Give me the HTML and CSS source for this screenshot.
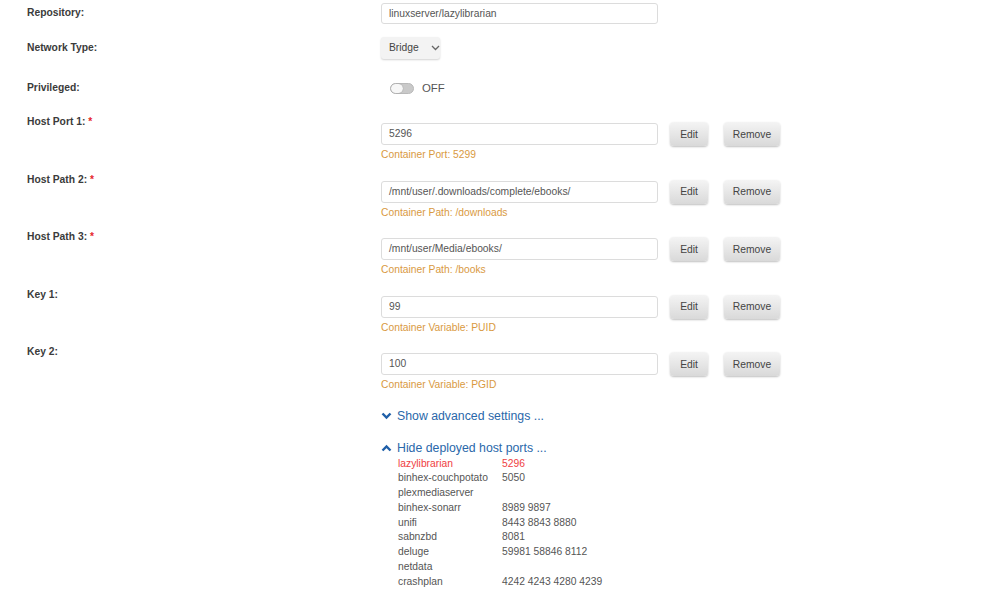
FILE: index.html
```html
<!DOCTYPE html>
<html>
<head>
<meta charset="utf-8">
<link rel="stylesheet" href="styles.css">
</head>
<body>
<div class="form">
  <div class="row r-repo">
    <div class="label">Repository:</div>
    <div class="field"><div class="input">linuxserver/lazylibrarian</div></div>
  </div>
  <div class="row r-net">
    <div class="label">Network Type:</div>
    <div class="field">
      <div class="select">Bridge
        <svg class="sel-caret" width="9" height="6" viewBox="0 0 9 6"><path d="M1 1 L4.5 4.5 L8 1" fill="none" stroke="#666" stroke-width="1.3"/></svg>
      </div>
    </div>
  </div>
  <div class="row r-priv">
    <div class="label">Privileged:</div>
    <div class="field toggle-wrap">
      <span class="toggle"><span class="knob"></span></span>
      <span class="off">OFF</span>
    </div>
  </div>

  <div class="row cfg">
    <div class="label">Host Port 1: <span class="req">*</span></div>
    <div class="field">
      <div class="line"><div class="input">5296</div><button class="btn edit">Edit</button><button class="btn remove">Remove</button></div>
      <div class="desc">Container Port: 5299</div>
    </div>
  </div>
  <div class="row cfg">
    <div class="label">Host Path 2: <span class="req">*</span></div>
    <div class="field">
      <div class="line"><div class="input">/mnt/user/.downloads/complete/ebooks/</div><button class="btn edit">Edit</button><button class="btn remove">Remove</button></div>
      <div class="desc">Container Path: /downloads</div>
    </div>
  </div>
  <div class="row cfg">
    <div class="label">Host Path 3: <span class="req">*</span></div>
    <div class="field">
      <div class="line"><div class="input">/mnt/user/Media/ebooks/</div><button class="btn edit">Edit</button><button class="btn remove">Remove</button></div>
      <div class="desc">Container Path: /books</div>
    </div>
  </div>
  <div class="row cfg">
    <div class="label">Key 1:</div>
    <div class="field">
      <div class="line"><div class="input">99</div><button class="btn edit">Edit</button><button class="btn remove">Remove</button></div>
      <div class="desc">Container Variable: PUID</div>
    </div>
  </div>
  <div class="row cfg">
    <div class="label">Key 2:</div>
    <div class="field">
      <div class="line"><div class="input">100</div><button class="btn edit">Edit</button><button class="btn remove">Remove</button></div>
      <div class="desc">Container Variable: PGID</div>
    </div>
  </div>

  <div class="links">
    <div class="link adv">
      <svg class="chev" width="11" height="8" viewBox="0 0 11 8"><path d="M1.5 1.5 L5.5 5.5 L9.5 1.5" fill="none" stroke="#1f5fa8" stroke-width="2.4"/></svg>
      <span>Show advanced settings ...</span>
    </div>
    <div class="link hide">
      <svg class="chev" width="11" height="8" viewBox="0 0 11 8"><path d="M1.5 6.5 L5.5 2.5 L9.5 6.5" fill="none" stroke="#1f5fa8" stroke-width="2.4"/></svg>
      <span>Hide deployed host ports ...</span>
    </div>
    <div class="ports">
      <div class="prow cur"><span class="pname">lazylibrarian</span><span>5296</span></div>
      <div class="prow"><span class="pname">binhex-couchpotato</span><span>5050</span></div>
      <div class="prow"><span class="pname">plexmediaserver</span><span></span></div>
      <div class="prow"><span class="pname">binhex-sonarr</span><span>8989 9897</span></div>
      <div class="prow"><span class="pname">unifi</span><span>8443 8843 8880</span></div>
      <div class="prow"><span class="pname">sabnzbd</span><span>8081</span></div>
      <div class="prow"><span class="pname">deluge</span><span>59981 58846 8112</span></div>
      <div class="prow"><span class="pname">netdata</span><span></span></div>
      <div class="prow"><span class="pname">crashplan</span><span>4242 4243 4280 4239</span></div>
    </div>
  </div>
</div>
</body>
</html>
```

FILE: styles.css
```css
html, body {
  margin: 0;
  padding: 0;
  background: #ffffff;
}
body {
  font-family: "Liberation Sans", Arial, sans-serif;
  color: #555555;
  font-size: 10.3px;
}
.form {
  padding: 3px 0 0 27px;
}
.row {
  display: flex;
  align-items: flex-start;
}
.label {
  width: 354px;
  flex: none;
  font-weight: bold;
  font-size: 10.3px;
  line-height: 14px;
  color: #3b3b3b;
}
.req {
  color: #e6272c;
}
.field {
  flex: none;
}
.input {
  box-sizing: border-box;
  width: 277px;
  height: 22px;
  border: 1px solid #dcdcdc;
  border-radius: 3px;
  padding: 0 7px;
  line-height: 20px;
  font-size: 10.3px;
  color: #555;
  background: #fff;
}
.r-repo .label { margin-top: 3px; }
.r-repo .input { height: 21px; line-height: 19px; }

.r-net { margin-top: 13px; }
.r-net .label { margin-top: 4px; }
.select {
  box-sizing: border-box;
  width: 59px;
  height: 22px;
  background: #f3f3f3;
  border-radius: 3px;
  box-shadow: 0 1px 2px rgba(0,0,0,0.18);
  padding-left: 8px;
  line-height: 22px;
  font-size: 10.3px;
  color: #444;
  display: flex;
  align-items: center;
  gap: 12px;
}
.sel-caret { display: block; }

.r-priv { margin-top: 21px; }
.r-priv .label { margin-top: 1px; }
.toggle-wrap {
  display: flex;
  align-items: center;
  height: 14px;
  padding-left: 9px;
  margin-top: 1px;
}
.toggle {
  box-sizing: border-box;
  width: 24px;
  height: 11px;
  border-radius: 6px;
  background: #c9c9c9;
  border: 1px solid #b9b9b9;
  position: relative;
  display: block;
}
.knob {
  position: absolute;
  left: 0;
  top: 0;
  width: 12px;
  height: 9px;
  border-radius: 5px;
  background: #f7f7f7;
  box-shadow: 0 0 1px rgba(0,0,0,0.4);
}
.off {
  margin-left: 8px;
  font-size: 11.4px;
  color: #555;
}

.r-priv + .cfg { margin-top: 19px; }
.cfg { margin-bottom: 9.5px; }
.cfg .label { margin-top: 1px; }
.cfg .field { margin-top: 9px; }
.line {
  display: flex;
  align-items: center;
  height: 22px;
}
.btn {
  box-sizing: border-box;
  flex: none;
  height: 24px;
  border: none;
  border-radius: 4px;
  background: linear-gradient(#f4f4f4, #d9d9d9);
  box-shadow: 0 1px 2px rgba(0,0,0,0.25);
  font-family: "Liberation Sans", Arial, sans-serif;
  font-size: 10.3px;
  color: #444;
  padding: 0;
}
.edit { width: 38px; margin-left: 12px; }
.remove { width: 56px; margin-left: 16px; }
.desc {
  margin-top: 3px;
  line-height: 14px;
  font-size: 10.3px;
  color: #d99a3f;
}

.links {
  margin-left: 354px;
  padding-top: 6px;
}
.link {
  display: flex;
  align-items: center;
  height: 16px;
  font-size: 12.3px;
  color: #2a68aa;
}
.link .chev { margin-right: 5px; display: block; }
.hide { margin-top: 16px; }
.ports {
  padding-left: 17px;
  margin-top: 1px;
}
.prow {
  display: flex;
  line-height: 14.75px;
  font-size: 10.3px;
  color: #555;
}
.pname { width: 104px; }
.prow.cur { color: #ef3e42; }
```
